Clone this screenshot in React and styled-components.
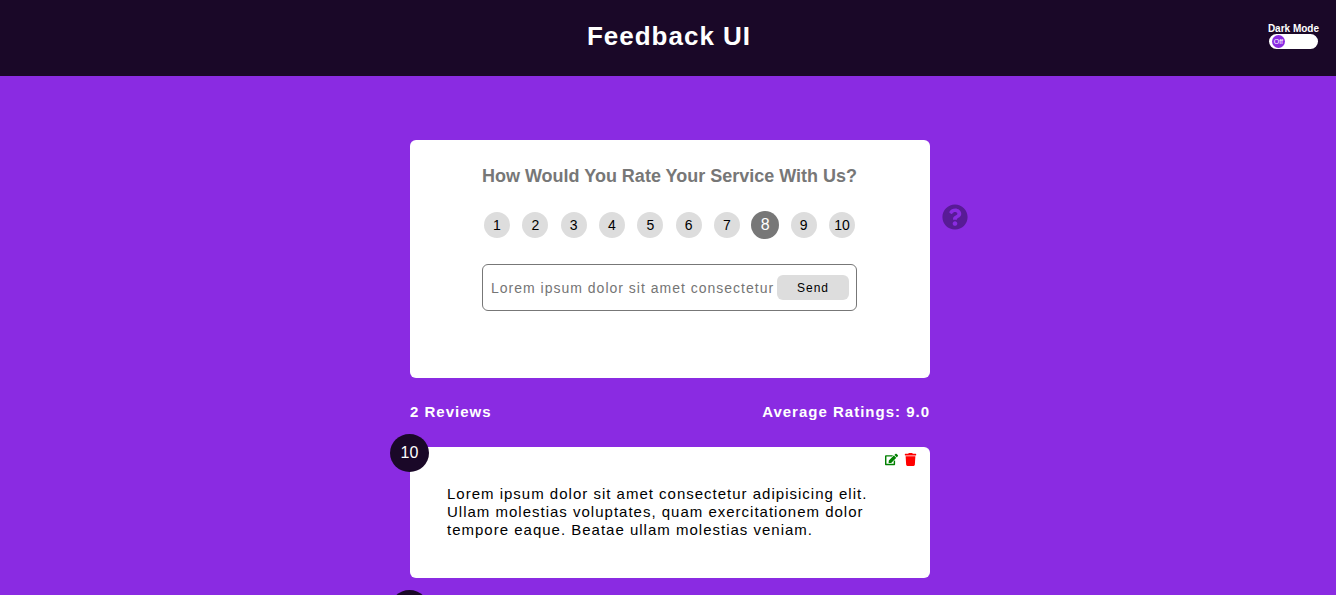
import React, { useState } from "react";
import styled, { createGlobalStyle } from "styled-components";
import { FaQuestionCircle, FaEdit, FaTrash } from "react-icons/fa";

const GlobalStyle = createGlobalStyle`
  *, *::before, *::after { box-sizing: border-box; }
  html { scrollbar-width: none; }
  body {
    margin: 0;
    min-height: 100vh;
    background: #8a2be2;
    font-family: Arial, "Liberation Sans", sans-serif;
    color: #000;
  }
  button, input { font-family: inherit; }
`;

const Header = styled.header`
  display: grid;
  grid-template-columns: 1fr auto 1fr;
  align-items: center;
  height: 76px;
  padding: 0 17px;
  background: #1a0828;
  color: #fff;
`;

const Title = styled.h1`
  grid-column: 2;
  margin: 0;
  padding: 0 0 4px 2px;
  font-size: 26px;
  line-height: 32px;
  letter-spacing: 1px;
`;

const ModeSwitch = styled.label`
  justify-self: end;
  display: flex;
  flex-direction: column;
  align-items: center;
  padding-bottom: 3px;
  font-size: 10px;
  font-weight: bold;
  line-height: 10px;
  cursor: pointer;
`;

const HiddenInput = styled.input`
  position: absolute;
  opacity: 0;
  width: 1px;
  height: 1px;
  margin: 0;
`;

const Track = styled.span`
  display: flex;
  align-items: center;
  justify-content: ${({ $on }) => ($on ? "flex-end" : "flex-start")};
  width: 49px;
  height: 15px;
  padding: 0 3px;
  border-radius: 8px;
  background: #fff;
`;

const Knob = styled.span`
  display: flex;
  align-items: center;
  justify-content: center;
  width: 13px;
  height: 13px;
  border-radius: 50%;
  background: #8a2be2;
  font-size: 7px;
  font-weight: normal;
`;

const Main = styled.main`
  width: 100%;
  max-width: 524px;
  margin: 0 auto;
  padding: 64px 0 24px 4px;
`;

const FormArea = styled.section`
  position: relative;
`;

const FormCard = styled.form`
  display: flex;
  flex-direction: column;
  align-items: center;
  min-height: 238px;
  padding: 24px 73px 24px 72px;
  border-radius: 6px;
  background: #fff;
`;

const Question = styled.h2`
  margin: 0 0 22px;
  font-size: 18px;
  line-height: 24px;
  color: #777;
  white-space: nowrap;
`;

const Ratings = styled.div`
  display: flex;
  align-items: center;
  justify-content: space-between;
  align-self: stretch;
  height: 30px;
  padding: 0 2px;
`;

const Rating = styled.label`
  display: flex;
  align-items: center;
  justify-content: center;
  width: ${({ $active }) => ($active ? 28 : 26)}px;
  height: ${({ $active }) => ($active ? 28 : 26)}px;
  margin: 0 ${({ $active }) => ($active ? -1 : 0)}px;
  border-radius: 50%;
  background: ${({ $active }) => ($active ? "#777" : "#ddd")};
  color: ${({ $active }) => ($active ? "#fff" : "#000")};
  font-size: ${({ $active }) => ($active ? 16 : 14)}px;
  cursor: pointer;
`;

const Field = styled.div`
  display: flex;
  align-items: center;
  align-self: stretch;
  height: 47px;
  margin-top: 24px;
  padding: 0 7px 0 8px;
  border: 1px solid #777;
  border-radius: 6px;
`;

const TextInput = styled.input`
  flex: 1;
  min-width: 0;
  padding: 0;
  border: 0;
  outline: 0;
  background: transparent;
  font-size: 14px;
  line-height: 20px;
  letter-spacing: 1px;
  &::placeholder { color: #757575; }
`;

const SendButton = styled.button`
  width: 72px;
  height: 25px;
  padding: 0;
  border: 0;
  border-radius: 6px;
  background: #ddd;
  color: #000;
  font-size: 12px;
  letter-spacing: 1px;
  cursor: pointer;
`;

const HelpLink = styled.a`
  position: absolute;
  top: 64px;
  left: calc(100% + 12px);
  display: flex;
  color: #581b96;
  font-size: 26px;
`;

const Summary = styled.div`
  display: flex;
  justify-content: space-between;
  padding: 24px 0 25px;
  font-size: 15px;
  font-weight: bold;
  line-height: 20px;
  letter-spacing: 1px;
  color: #fff;
`;

const ReviewList = styled.ul`
  display: flex;
  flex-direction: column;
  gap: 25px;
  margin: 0;
  padding: 0;
  list-style: none;
`;

const ReviewCard = styled.li`
  position: relative;
  padding: 38px 37px 39px;
  border-radius: 6px;
  background: #fff;
`;

const Score = styled.span`
  position: absolute;
  top: -13px;
  left: -20px;
  display: flex;
  align-items: center;
  justify-content: center;
  width: 39px;
  height: 38px;
  border-radius: 50%;
  background: #1a0828;
  color: #fff;
  font-size: 16px;
`;

const Actions = styled.div`
  position: absolute;
  top: 6px;
  right: 13px;
  display: flex;
  gap: 6px;
`;

const IconButton = styled.button`
  display: flex;
  padding: 0;
  border: 0;
  background: none;
  color: ${({ $color }) => $color};
  font-size: 13px;
  cursor: pointer;
`;

const ReviewText = styled.p`
  margin: 0;
  font-size: 15px;
  line-height: 18px;
  letter-spacing: 1px;
`;

const TEXT =
  "Lorem ipsum dolor sit amet consectetur adipisicing elit. Ullam molestias voluptates, quam exercitationem dolor tempore eaque. Beatae ullam molestias veniam.";

const REVIEWS = [
  { id: 1, score: 10, text: TEXT },
  { id: 2, score: 8, text: TEXT },
];

export default function App() {
  const [dark, setDark] = useState(false);
  const [rating, setRating] = useState(8);
  const [reviews, setReviews] = useState(REVIEWS);
  const average = reviews.length
    ? reviews.reduce((sum, r) => sum + r.score, 0) / reviews.length
    : 0;

  return (
    <>
      <GlobalStyle />
      <Header>
        <Title>Feedback UI</Title>
        <ModeSwitch>
          Dark Mode
          <HiddenInput
            type="checkbox"
            role="switch"
            checked={dark}
            onChange={(e) => setDark(e.target.checked)}
          />
          <Track $on={dark}>
            <Knob>{dark ? "On" : "Off"}</Knob>
          </Track>
        </ModeSwitch>
      </Header>
      <Main>
        <FormArea>
          <FormCard onSubmit={(e) => e.preventDefault()}>
            <Question id="question">How Would You Rate Your Service With Us?</Question>
            <Ratings role="radiogroup" aria-labelledby="question">
              {Array.from({ length: 10 }, (_, i) => i + 1).map((n) => (
                <Rating key={n} $active={n === rating}>
                  <HiddenInput
                    type="radio"
                    name="rating"
                    value={n}
                    checked={n === rating}
                    onChange={() => setRating(n)}
                  />
                  {n}
                </Rating>
              ))}
            </Ratings>
            <Field>
              <TextInput
                type="text"
                aria-label="Review"
                placeholder="Lorem ipsum dolor sit amet consectetur"
              />
              <SendButton type="submit">Send</SendButton>
            </Field>
          </FormCard>
          <HelpLink href="#about" aria-label="About">
            <FaQuestionCircle />
          </HelpLink>
        </FormArea>
        <Summary>
          <span>{reviews.length} Reviews</span>
          <span>Average Ratings: {average.toFixed(1)}</span>
        </Summary>
        <ReviewList>
          {reviews.map((r) => (
            <ReviewCard key={r.id}>
              <Score>{r.score}</Score>
              <Actions>
                <IconButton type="button" $color="green" aria-label="Edit review">
                  <FaEdit />
                </IconButton>
                <IconButton
                  type="button"
                  $color="red"
                  aria-label="Delete review"
                  onClick={() => setReviews(reviews.filter((x) => x.id !== r.id))}
                >
                  <FaTrash />
                </IconButton>
              </Actions>
              <ReviewText>{r.text}</ReviewText>
            </ReviewCard>
          ))}
        </ReviewList>
      </Main>
    </>
  );
}
